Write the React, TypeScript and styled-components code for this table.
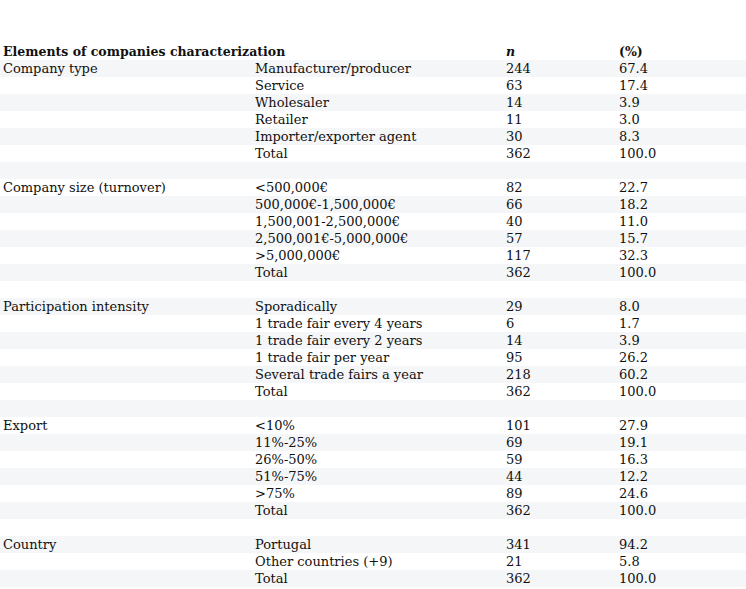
import React from "react";
import styled, { createGlobalStyle } from "styled-components";

const GlobalStyle = createGlobalStyle`
    body {
        margin: 0;
        background: #ffffff;
        font-family: "DejaVu Serif", "Liberation Serif", serif;
        color: #111111;
    }
`;

const Page = styled.div`
    padding-top: 43px;
    width: 746px;
`;

const Table = styled.table`
    width: 746px;
    border-collapse: collapse;
    table-layout: fixed;
    font-size: 13px;

    tbody tr:nth-child(odd) {
        background-color: #f5f6f8;
    }
`;

const Row = styled.tr`
    height: 17px;
`;

const Cell = styled.td`
    padding: 0 0 0 3px;
    height: 17px;
    line-height: 17px;
    white-space: nowrap;
    vertical-align: middle;
`;

const HeadCell = styled.th<{ $italic?: boolean }>`
    padding: 0 0 0 3px;
    height: 17px;
    line-height: 17px;
    text-align: left;
    font-size: 12.5px;
    font-weight: bold;
    font-style: ${(p) => (p.$italic ? "italic" : "normal")};
    white-space: nowrap;
`;

type ItemType = {
    label: string;
    n: number;
    pct: string;
};

type GroupType = {
    name: string;
    items: ItemType[];
};

const groups: GroupType[] = [
    {
        name: "Company type",
        items: [
            { label: "Manufacturer/producer", n: 244, pct: "67.4" },
            { label: "Service", n: 63, pct: "17.4" },
            { label: "Wholesaler", n: 14, pct: "3.9" },
            { label: "Retailer", n: 11, pct: "3.0" },
            { label: "Importer/exporter agent", n: 30, pct: "8.3" },
            { label: "Total", n: 362, pct: "100.0" },
        ],
    },
    {
        name: "Company size (turnover)",
        items: [
            { label: "<500,000€", n: 82, pct: "22.7" },
            { label: "500,000€-1,500,000€", n: 66, pct: "18.2" },
            { label: "1,500,001-2,500,000€", n: 40, pct: "11.0" },
            { label: "2,500,001€-5,000,000€", n: 57, pct: "15.7" },
            { label: ">5,000,000€", n: 117, pct: "32.3" },
            { label: "Total", n: 362, pct: "100.0" },
        ],
    },
    {
        name: "Participation intensity",
        items: [
            { label: "Sporadically", n: 29, pct: "8.0" },
            { label: "1 trade fair every 4 years", n: 6, pct: "1.7" },
            { label: "1 trade fair every 2 years", n: 14, pct: "3.9" },
            { label: "1 trade fair per year", n: 95, pct: "26.2" },
            { label: "Several trade fairs a year", n: 218, pct: "60.2" },
            { label: "Total", n: 362, pct: "100.0" },
        ],
    },
    {
        name: "Export",
        items: [
            { label: "<10%", n: 101, pct: "27.9" },
            { label: "11%-25%", n: 69, pct: "19.1" },
            { label: "26%-50%", n: 59, pct: "16.3" },
            { label: "51%-75%", n: 44, pct: "12.2" },
            { label: ">75%", n: 89, pct: "24.6" },
            { label: "Total", n: 362, pct: "100.0" },
        ],
    },
    {
        name: "Country",
        items: [
            { label: "Portugal", n: 341, pct: "94.2" },
            { label: "Other countries (+9)", n: 21, pct: "5.8" },
            { label: "Total", n: 362, pct: "100.0" },
        ],
    },
];

const App: React.FC = () => {
    const rows: React.ReactNode[] = [];
    groups.forEach((g, gi) => {
        g.items.forEach((item, i) => {
            rows.push(
                <Row key={`${gi}-${i}`}>
                    <Cell>{i === 0 ? g.name : ""}</Cell>
                    <Cell>{item.label}</Cell>
                    <Cell>{item.n}</Cell>
                    <Cell>{item.pct}</Cell>
                </Row>
            );
        });
        if (gi < groups.length - 1) {
            rows.push(
                <Row key={`sp-${gi}`}>
                    <Cell />
                    <Cell />
                    <Cell />
                    <Cell />
                </Row>
            );
        }
    });

    return (
        <Page>
            <GlobalStyle />
            <Table>
                <colgroup>
                    <col style={{ width: 252 }} />
                    <col style={{ width: 251 }} />
                    <col style={{ width: 113 }} />
                    <col style={{ width: 130 }} />
                </colgroup>
                <thead>
                    <Row>
                        <HeadCell colSpan={2}>Elements of companies characterization</HeadCell>
                        <HeadCell $italic>n</HeadCell>
                        <HeadCell>(%)</HeadCell>
                    </Row>
                </thead>
                <tbody>{rows}</tbody>
            </Table>
        </Page>
    );
};

export default App;
